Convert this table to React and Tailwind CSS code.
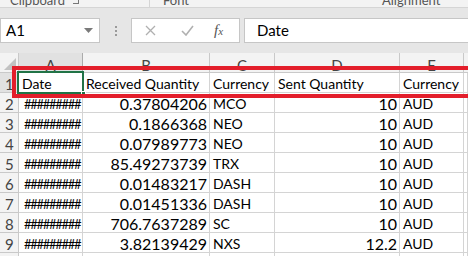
import React from "react";

const cols = [
  { key: "A", w: "w-[64px]" },
  { key: "B", w: "w-[127px]" },
  { key: "C", w: "w-[65px]" },
  { key: "D", w: "w-[125px]" },
  { key: "E", w: "w-[64px]" },
];

const rows = [
  ["0.37804206", "MCO", "10"],
  ["0.1866368", "NEO", "10"],
  ["0.07989773", "NEO", "10"],
  ["85.49273739", "TRX", "10"],
  ["0.01483217", "DASH", "10"],
  ["0.01451336", "DASH", "10"],
  ["706.7637289", "SC", "10"],
  ["3.82139429", "NXS", "12.2"],
];

const headers = ["Date", "Received Quantity", "Currency", "Sent Quantity", "Currency"];

const Cell = ({ className = "", children }) => (
  <div
    className={`h-[20px] shrink-0 border-r border-b border-[#d4d4d4] flex items-end leading-[16px] overflow-hidden whitespace-nowrap ${className}`}
  >
    {children}
  </div>
);

const RowHead = ({ children, active }) => (
  <div
    className={`w-[19px] h-[20px] shrink-0 border-r border-b border-[#c9c9c9] flex items-end pl-[5px] leading-[16px] text-[15px] text-[#444] ${
      active ? "bg-[#e1e1e1]" : "bg-[#f3f3f3]"
    }`}
  >
    {children}
  </div>
);

export default function App() {
  return (
    <div
      className="relative w-[468px] h-[256px] overflow-hidden bg-white text-black"
      style={{ fontFamily: "Lato, 'Open Sans', sans-serif" }}
    >
      {/* ribbon group labels, clipped */}
      <div className="h-[8px] bg-[#f3f3f3] border-b border-[#d5d5d5] overflow-hidden flex text-[13px] text-[#555] leading-none">
        <div className="relative w-[150px] pl-[10px] -mt-[6px] flex">
          <span>Clipboard</span>
          <span className="ml-[8px] mt-[4px] w-[6px] h-[6px] border-r border-b border-[#777]" />
          <span className="absolute right-[0px] top-0 h-[20px] w-px bg-[#d5d5d5]" />
        </div>
        <div className="w-[212px] pl-[13px] -mt-[6px]">Font</div>
        <div className="pl-[20px] -mt-[6px]">Alignment</div>
      </div>

      {/* formula bar */}
      <div className="h-[45px] bg-[#e6e6e6] flex items-start pt-[10px]">
        <div className="w-[100px] h-[25px] bg-white border border-[#c6c6c6] flex items-center pl-[5px] pr-[6px]">
          <span className="text-[15px] flex-1">A1</span>
          <svg width="9" height="5" viewBox="0 0 9 5">
            <path d="M0 0h9L4.5 5z" fill="#7a7a7a" />
          </svg>
        </div>
        <div className="w-[31px] h-[25px] flex flex-col items-center justify-center gap-[2px]">
          <span className="w-[2px] h-[2px] bg-[#9a9a9a]" />
          <span className="w-[2px] h-[2px] bg-[#9a9a9a]" />
          <span className="w-[2px] h-[2px] bg-[#9a9a9a]" />
        </div>
        <div className="w-[109px] h-[25px] bg-white border border-[#c6c6c6] flex items-center">
          <svg className="ml-[13px]" width="11" height="11" viewBox="0 0 11 11">
            <path d="M1 1l9 9M10 1l-9 9" stroke="#b0b0b0" strokeWidth="1.3" />
          </svg>
          <svg className="ml-[25px]" width="13" height="11" viewBox="0 0 13 11">
            <path d="M1 6l4 4 7-9" stroke="#b0b0b0" strokeWidth="1.6" fill="none" />
          </svg>
          <span
            className="ml-[20px] text-[15px] italic text-[#555]"
            style={{ fontFamily: "'Liberation Serif', serif" }}
          >
            f<span className="text-[11px]">x</span>
          </span>
        </div>
        <div className="ml-[4px] flex-1 h-[25px] bg-white border border-[#c6c6c6] border-r-0 flex items-center pl-[12px] text-[15px]">
          Date
        </div>
      </div>

      {/* sheet */}
      <div className="flex flex-col">
        <div className="flex h-[20px]">
          <div className="relative w-[19px] h-[20px] bg-[#f3f3f3] border-r border-b border-[#c9c9c9]">
            <svg className="absolute right-[2px] bottom-[2px]" width="12" height="12" viewBox="0 0 12 12">
              <path d="M12 0v12H0z" fill="#c2c2c2" />
            </svg>
          </div>
          {cols.map((c) => (
            <div
              key={c.key}
              className={`${c.w} h-[20px] shrink-0 flex justify-center pt-[1px] text-[15px] text-[#444] border-r border-b ${
                c.key === "A" ? "bg-[#e1e1e1] border-[#ababab]" : "bg-[#f3f3f3] border-[#c9c9c9]"
              }`}
            >
              {c.key}
            </div>
          ))}
          <div className="flex-1 h-[20px] bg-[#f3f3f3] border-b border-[#c9c9c9]" />
        </div>

        <div className="flex">
          <RowHead active>1</RowHead>
          {headers.map((h, i) => (
            <Cell key={i} className={`${cols[i].w} pl-[3px] text-[14px]`}>
              {h}
            </Cell>
          ))}
          <Cell className="flex-1" />
        </div>

        {rows.map((r, i) => (
          <div key={i} className="flex">
            <RowHead>{i + 2}</RowHead>
            <Cell className="w-[64px] pl-[5px] text-[13px] tracking-[-1.3px]">#########</Cell>
            <Cell className="w-[127px] justify-end pr-[2px] text-[16px]">{r[0]}</Cell>
            <Cell className="w-[65px] pl-[3px] text-[14px]">{r[1]}</Cell>
            <Cell className="w-[125px] justify-end pr-[2px] text-[16px]">{r[2]}</Cell>
            <Cell className="w-[64px] pl-[3px] text-[14px]">AUD</Cell>
            <Cell className="flex-1" />
          </div>
        ))}

        <div className="flex">
          <RowHead>10</RowHead>
          {cols.map((c) => (
            <Cell key={c.key} className={c.w} />
          ))}
          <Cell className="flex-1" />
        </div>
      </div>

      {/* selected cell A1 */}
      <div className="absolute left-[17px] top-[71px] w-[67px] h-[23px] border-2 border-[#217346]">
        <span className="absolute -right-[4px] -bottom-[4px] w-[5px] h-[5px] bg-[#217346] border border-white" />
      </div>

      {/* red highlight */}
      <div className="absolute left-[12px] top-[66px] w-[470px] h-[32px] border-[4px] border-[#e31e2b]" />
    </div>
  );
}
